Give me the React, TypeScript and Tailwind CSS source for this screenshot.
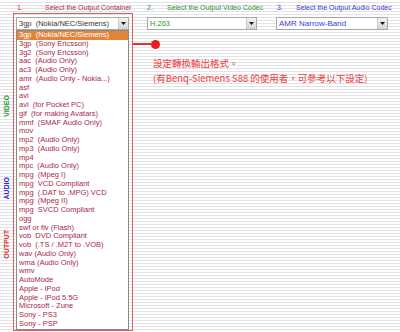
import React from 'react';

const formats = [
  '3gp  (Nokia/NEC/Siemens)',
  '3gp  (Sony Ericsson)',
  '3g2  (Sony Ericsson)',
  'aac  (Audio Only)',
  'ac3  (Audio Only)',
  'amr  (Audio Only - Nokia...)',
  'asf',
  'avi',
  'avi  (for Pocket PC)',
  'gif  (for making Avatars)',
  'mmf  (SMAF Audio Only)',
  'mov',
  'mp2  (Audio Only)',
  'mp3  (Audio Only)',
  'mp4',
  'mpc  (Audio Only)',
  'mpg  (Mpeg I)',
  'mpg  VCD Compliant',
  'mpg  (.DAT to .MPG) VCD',
  'mpg  (Mpeg II)',
  'mpg  SVCD Compliant',
  'ogg',
  'swf or flv (Flash)',
  'vob  DVD Compliant',
  'vob  (.TS / .M2T to .VOB)',
  'wav (Audio Only)',
  'wma (Audio Only)',
  'wmv',
  'AutoMode',
  'Apple - iPod',
  'Apple - iPod 5.5G',
  'Microsoft - Zune',
  'Sony - PS3',
  'Sony - PSP',
];

const ArrowButton = () => (
  <div className="w-[10px] h-full flex items-center justify-center border-l border-[#c8c8c8] bg-gradient-to-b from-[#f4f4f4] to-[#d4d4d4]">
    <svg width="5" height="3" viewBox="0 0 5 3">
      <path d="M0 0h5L2.5 3z" fill="#111" />
    </svg>
  </div>
);

const Select = ({ label, color, width, size = 'text-[7.5px]' }: { label: string; color: string; width: string; size?: string }) => (
  <div className={`${width} h-[13px] flex bg-white border border-[#a8a8a8]`}>
    <div className={`flex-1 flex items-center pl-[2px] ${size} ${color} whitespace-pre`}>{label}</div>
    <ArrowButton />
  </div>
);

export default function App() {
  return (
    <div className="w-[400px] h-[332px] overflow-hidden bg-[repeating-linear-gradient(to_bottom,#ffffff_0px,#ffffff_2px,#e2e2e7_2px,#e2e2e7_3px)] font-['Liberation_Sans',Arial,sans-serif]">
      {/* step headers */}
      <div className="flex h-[13px] pt-[4px] text-[7px] leading-[8px] whitespace-nowrap">
        <span className="ml-[17px] w-[28px] text-[#a8304a]">1.</span>
        <span className="w-[102px] text-[#a8304a]">Select the Output Container</span>
        <span className="w-[20px] text-[#2f962f]">2.</span>
        <span className="w-[110px] text-[#2f962f]">Select the Output Video Codec</span>
        <span className="w-[19px] text-[#3a3ad8]">3.</span>
        <span className="text-[#3a3ad8]">Select the Output Audio Codec</span>
      </div>

      <div className="flex">
        {/* side labels */}
        <div className="w-[13px] flex flex-col items-center text-[7px] font-bold leading-[8px]">
          <span className="mt-[82px] [writing-mode:vertical-rl] rotate-180 text-[#2f9a2f]">VIDEO</span>
          <span className="mt-[60px] [writing-mode:vertical-rl] rotate-180 text-[#2a2ad8]">AUDIO</span>
          <span className="mt-[31px] [writing-mode:vertical-rl] rotate-180 text-[#e03030]">OUTPUT</span>
        </div>

        {/* container frame */}
        <div className="w-[120px] border border-[#e85a5a] pt-[3px] pl-[2px] pr-[3px] shrink-0">
          <Select label="3gp  (Nokia/NEC/Siemens)" color="text-[#333]" width="w-full" />
          <div className="bg-white border border-[#8a8a8a] text-[7.5px] leading-[8.75px]">
            {formats.map((f, i) => (
              <div
                key={i}
                className={`pl-[2px] whitespace-pre ${i === 0 ? 'bg-[#e2843a] text-white' : 'text-[#a8284c]'}`}
              >
                {f}
              </div>
            ))}
          </div>
        </div>

        {/* codecs and note */}
        <div className="flex-1 flex flex-col">
          <div className="flex mt-[4px]">
            <div className="ml-[14px]">
              <Select label="H.263" color="text-[#2f962f]" width="w-[110px]" />
            </div>
            <div className="ml-[19px]">
              <Select label="AMR Narrow-Band" color="text-[#3a3ae0]" width="w-[112px]" size="text-[8px]" />
            </div>
          </div>

          <div className="flex items-center mt-[9px] h-[10px]">
            <div className="w-[18px] h-[2px] bg-[#e83030]" />
            <div className="w-[9px] h-[9px] rounded-full bg-[#e81c1c]" />
          </div>

          <div className="ml-[20px] mt-[7px] text-[9.5px] leading-[15px] text-[#f03a3a] font-['Noto_Sans_CJK_TC',sans-serif] whitespace-nowrap">
            <div>設定轉換輸出格式。</div>
            <div>(有Benq-Siemens S88 的使用者，可參考以下設定)</div>
          </div>
        </div>
      </div>
    </div>
  );
}
